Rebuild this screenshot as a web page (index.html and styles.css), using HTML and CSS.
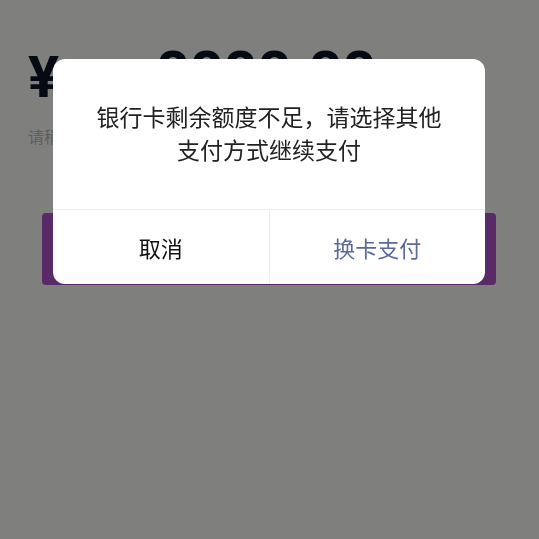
FILE: index.html
```html
<!DOCTYPE html>
<html>
<head lang="zh">
    <meta charset="UTF-8">
    <title>支付</title>
    <link rel="stylesheet" href="styles.css">
</head>
<body>
    <div class="page">
        <div class="amount">
            <span class="yen">¥</span>
            <span class="num">8888.88</span>
        </div>
        <p class="tip">请稍后完成支付</p>
        <div class="pay-btn">确认支付</div>
    </div>

    <div class="mask"></div>
    <div class="dialog">
        <div class="msg">银行卡剩余额度不足，请选择其他支付方式继续支付</div>
        <div class="btns">
            <span class="cancel">取消</span>
            <span class="ok">换卡支付</span>
        </div>
    </div>
</body>
</html>
```

FILE: styles.css
```css
* {
    padding: 0;
    margin: 0;
    box-sizing: border-box;
}
body,html{
    height: 100%;
    overflow: hidden;
}
body{
    background: #fffffb;
    font-family: "Noto Sans CJK SC", Roboto, "Liberation Sans", sans-serif;
}
.page{
    padding: 43px 43px 0 28px;
}
.amount{
    display: grid;
    grid-template-columns: 1fr auto 1fr;
    align-items: start;
    color: #0d1426;
    font-family: Roboto, "Liberation Sans", sans-serif;
    font-weight: bold;
    line-height: 1;
}
.yen{
    font-size: 58px;
    margin-top: 5px;
}
.num{
    font-size: 59px;
    margin-left: 8px;
}
.tip{
    margin-top: 18px;
    font-size: 16px;
    color: #b9bcc0;
}
.pay-btn{
    margin: 65px 0 0 14px;
    height: 72px;
    border-radius: 4px;
    background: #b455cc;
    color: #fff;
    font-size: 20px;
    display: flex;
    align-items: center;
    justify-content: center;
}
.mask{
    position: fixed;
    left: 0;
    top: 0;
    right: 0;
    bottom: 0;
    background: rgba(0,0,0,.5);
}
.dialog{
    position: fixed;
    top: 59px;
    left: 53px;
    width: 432px;
    background: #fff;
    border-radius: 12px;
    overflow: hidden;
}
.msg{
    padding: 41px 40px 43px;
    text-align: center;
    font-size: 23px;
    line-height: 33px;
    color: #222;
}
.btns{
    display: flex;
    border-top: 1px solid #eeeeee;
    height: 75px;
}
.btns span{
    flex: 1;
    display: flex;
    align-items: center;
    justify-content: center;
    font-size: 22px;
}
.cancel{
    color: #111;
    border-right: 1px solid #eeeeee;
}
.ok{
    color: #5b6b98;
}
```
